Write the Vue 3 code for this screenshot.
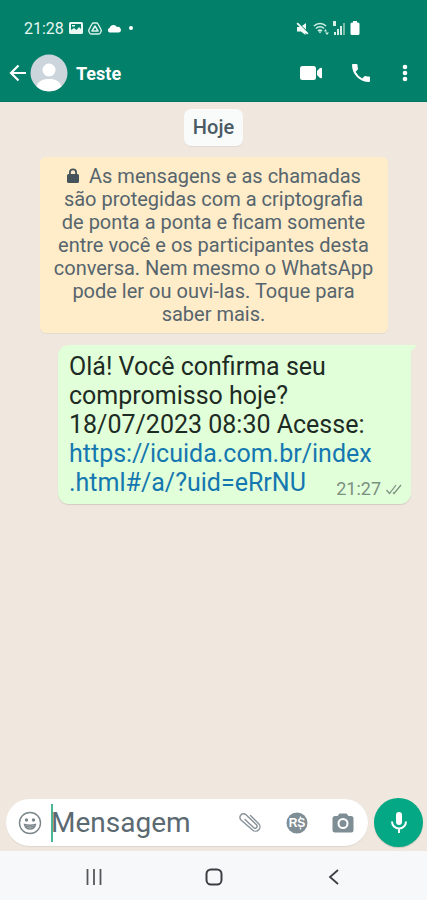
<script setup>
import { ref } from 'vue'

const draft = ref('')
const contact = 'Teste'
const link = ['https://icuida.com.br/index', '.html#/a/?uid=eRrNU']
</script>

<template>
  <div class="screen">
    <header class="top">
      <div class="status">
        <div class="status-left">
          <span class="clock">21:28</span>
          <svg width="14" height="12" viewBox="0 0 14 12" aria-hidden="true">
            <path fill="#e8f7f2" fill-rule="evenodd" d="M1.500 0h11A1.500 1.500 0 0 1 14 1.500v9a1.500 1.500 0 0 1-1.500 1.500h-11A1.500 1.500 0 0 1 0 10.500v-9A1.500 1.500 0 0 1 1.500 0zM2 2v6l3-2 2.500 2L10 5l2 2V2zM3 3h3v1.500H3z" />
          </svg>
          <svg width="14" height="13" viewBox="0 0 14 13" fill="none" stroke="#dcf2eb" stroke-linejoin="round" aria-hidden="true">
            <path stroke-width="1.400" d="M5.500 1h3q1 0 1.500 1l3 5.500q.5 1 0 2l-.7 1.500q-.5 1-1.500 1H3.200q-1 0-1.500-1L1 9.500q-.5-1 0-2L4 2q.5-1 1.500-1z" />
            <path stroke-width="1.500" d="M7 4 4 9h6z" />
          </svg>
          <svg width="14" height="9" viewBox="0 0 14 9" aria-hidden="true">
            <path fill="#fff" d="M2.500 8.500a2.300 2.300 0 0 1 0-4.400 4 4 0 0 1 7.400-1A2.800 2.800 0 0 1 12 8.500z" />
          </svg>
          <i class="dot"></i>
        </div>
        <div class="status-right">
          <svg width="13" height="13" viewBox="0 0 13 13" aria-hidden="true">
            <path fill="#f2fbf8" d="M1 5h3l5.500 5.500V13L5 9.500H1zM6 4l4-3v6.500zM.5 1.800 1.800.5l10.700 10.700-1.300 1.300z" />
          </svg>
          <svg width="16" height="13" viewBox="0 0 16 13" fill="none" stroke="#d5f0e7" stroke-width="1.600" aria-hidden="true">
            <path d="M1 4a8.500 8.500 0 0 1 12 0M3 6.500a5.500 5.500 0 0 1 8 0M5 9a3 3 0 0 1 4 0" />
            <path fill="#d5f0e7" stroke="none" d="M5.500 9.500h3L7 11.500zM11 9.500l1.500-2.500L14 9.500zM12 10.500h4l-2 2.500z" />
          </svg>
          <svg width="13" height="14" viewBox="0 0 13 14" aria-hidden="true">
            <path fill="#d5f0e7" d="M0 0h3v5H0zM1 11h2v3H1zM4 8h2v6H4zM7 5h2v9H7z" />
            <path fill="#78b9a8" d="M10 2h2v12h-2z" />
          </svg>
          <svg width="10" height="14" viewBox="0 0 10 14" aria-hidden="true">
            <path fill="#fff" d="M3 0h4v1.500h1A1.500 1.500 0 0 1 9.500 3v9.500A1.500 1.500 0 0 1 8 14H2A1.500 1.500 0 0 1 .5 12.500V3A1.500 1.500 0 0 1 2 1.500h1z" />
          </svg>
        </div>
      </div>

      <div class="bar">
        <button class="icon back" aria-label="Voltar">
          <svg width="18" height="18" viewBox="0 0 18 18" fill="none" stroke="#fff" stroke-width="2.200" aria-hidden="true">
            <path d="M17 9H2M9.500 1.500 2 9l7.500 7.500" />
          </svg>
        </button>
        <svg class="avatar" width="38" height="38" viewBox="0 0 38 38" aria-hidden="true">
          <circle cx="19" cy="19" r="18.500" fill="#cdd5dc" />
          <circle cx="19" cy="16" r="6.500" fill="#fff" />
          <path fill="#fff" d="M6.500 32.500C8 27.500 12 25 19 25s11 2.500 12.500 7.500A18.500 18.500 0 0 1 6.500 32.500z" />
        </svg>
        <h1>{{ contact }}</h1>
        <div class="actions">
          <button class="icon" aria-label="Chamada de vídeo">
            <svg width="24" height="16" viewBox="0 0 24 16" fill="#fff" aria-hidden="true">
              <rect x="1" y="1" width="16" height="14" rx="2.500" />
              <path d="M18 6l3-3q2-1 2 1v8q0 2-2 1l-3-3z" />
            </svg>
          </button>
          <button class="icon" aria-label="Chamada de voz">
            <svg width="24" height="24" viewBox="0 0 24 24" fill="#fff" aria-hidden="true">
              <path d="M6.620 10.790a15.150 15.150 0 0 0 6.590 6.590l2.200-2.200a1 1 0 0 1 1.020-.24 11.400 11.400 0 0 0 3.570.57 1 1 0 0 1 1 1V20a1 1 0 0 1-1 1A17 17 0 0 1 3 4a1 1 0 0 1 1-1h3.500a1 1 0 0 1 1 1c0 1.250.2 2.450.57 3.570a1 1 0 0 1-.25 1.020z" />
            </svg>
          </button>
          <button class="icon" aria-label="Mais opções">
            <svg width="12" height="18" viewBox="0 0 12 18" fill="#fff" aria-hidden="true">
              <circle cx="6" cy="3" r="2.300" /><circle cx="6" cy="9" r="2.300" /><circle cx="6" cy="15" r="2.300" />
            </svg>
          </button>
        </div>
      </div>
    </header>

    <main class="chat">
      <div class="day">Hoje</div>
      <p class="notice">
        <svg class="lock" width="14" height="16" viewBox="0 0 14 16" aria-hidden="true">
          <path fill="#44545a" fill-rule="evenodd" d="M3 6V4.500a4 4 0 0 1 8 0V6h.5A1.500 1.500 0 0 1 13 7.500v6a1.500 1.500 0 0 1-1.500 1.500h-9A1.500 1.500 0 0 1 1 13.500v-6A1.500 1.500 0 0 1 2.500 6zM4.800 6h4.400V4.500a2.200 2.200 0 0 0-4.400 0z" />
        </svg>
        As mensagens e as chamadas são protegidas com a criptografia de ponta a ponta e ficam somente entre você e os participantes desta conversa. Nem mesmo o WhatsApp pode ler ou ouvi-las. Toque para saber mais.
      </p>
      <article class="bubble">
        <svg class="tail" width="9" height="9" viewBox="0 0 9 9" aria-hidden="true">
          <path fill="#e1ffd9" d="M0 0h7q2 0 1 1.500L3 6v3H0z" />
        </svg>
        <p>Olá! Você confirma seu compromisso hoje? 18/07/2023 08:30 Acesse: <a href="#">{{ link[0] }}<wbr>{{ link[1] }}</a></p>
        <div class="meta">
          <time>21:27</time>
          <svg width="16" height="11" viewBox="0 0 16 11" fill="none" stroke="#7b8f81" stroke-width="1.200" aria-hidden="true">
            <path d="M.5 6l3 3.500L10 1M7 8.500l1 1L15 1" />
          </svg>
        </div>
      </article>
    </main>

    <form class="composer" @submit.prevent>
      <div class="field">
        <button type="button" class="icon" aria-label="Emoji">
          <svg width="24" height="24" viewBox="0 0 24 24" fill="none" stroke="#7c878c" stroke-width="1.400" aria-hidden="true">
            <circle cx="12" cy="12" r="10.500" />
            <circle cx="8.500" cy="9" r="1" fill="#7c878c" /><circle cx="15.500" cy="9" r="1" fill="#7c878c" />
            <path d="M6.500 13.500q5.500 1.500 11 0-1 4.500-5.500 4.500t-5.500-4.500z" />
            <path d="M8 15.500q4 1 8 0" />
          </svg>
        </button>
        <i class="caret"></i>
        <input v-model="draft" type="text" placeholder="Mensagem" aria-label="Mensagem" />
        <button type="button" class="icon" aria-label="Anexar">
          <svg width="24" height="22" viewBox="0 0 24 22" fill="none" stroke="#879197" stroke-width="1.400" stroke-linecap="round" aria-hidden="true">
            <path d="M12.500 3.500 20.500 11.500a4.200 4.200 0 0 1-6 6.500L3 8a3.600 3.600 0 0 1 5-5.200l10.500 10a2 2 0 0 1-3 2.700L7 7.500" />
          </svg>
        </button>
        <button type="button" class="icon" aria-label="Pagamento">
          <svg width="22" height="22" viewBox="0 0 22 22" aria-hidden="true">
            <circle cx="11" cy="11" r="10.500" fill="#7f8d95" />
            <text x="11" y="15" text-anchor="middle" class="coin">RS</text>
            <path d="M14.500 4.500v2M14.500 15.500v2" stroke="#fff" stroke-width="1.300" />
          </svg>
        </button>
        <button type="button" class="icon" aria-label="Câmera">
          <svg width="22" height="20" viewBox="0 0 22 20" aria-hidden="true">
            <path fill="#7f8d95" d="M7.500.5h7l2 2.500H19a2.500 2.500 0 0 1 2.500 2.500V17a2.500 2.500 0 0 1-2.500 2.500H3A2.500 2.500 0 0 1 .5 17V5.500A2.500 2.500 0 0 1 3 3h2.500z" />
            <circle cx="11" cy="10.500" r="4.500" fill="none" stroke="#fff" stroke-width="2" />
          </svg>
        </button>
      </div>
      <button type="button" class="mic" aria-label="Gravar áudio">
        <svg width="18" height="24" viewBox="0 0 18 24" aria-hidden="true">
          <rect x="6" y="1" width="6" height="13" rx="3" fill="#fff" />
          <path d="M2 10.500a7 7 0 0 0 14 0M9 17.500V22" fill="none" stroke="#fff" stroke-width="2" />
        </svg>
      </button>
    </form>

    <nav class="system">
      <button class="icon" aria-label="Recentes">
        <svg width="18" height="18" viewBox="0 0 18 18" stroke="#55585b" stroke-width="1.800" aria-hidden="true">
          <path d="M2.500 1v16M9 1v16M15.500 1v16" />
        </svg>
      </button>
      <button class="icon" aria-label="Início">
        <svg width="18" height="18" viewBox="0 0 18 18" fill="none" stroke="#3c3f42" stroke-width="2" aria-hidden="true">
          <rect x="1.500" y="1.500" width="15" height="15" rx="4.500" />
        </svg>
      </button>
      <button class="icon" aria-label="Voltar">
        <svg width="18" height="18" viewBox="0 0 18 18" fill="none" stroke="#3c3f42" stroke-width="1.800" aria-hidden="true">
          <path d="M13 2 5 9l8 7" />
        </svg>
      </button>
    </nav>
  </div>
</template>

<style>
body {
  background: #f0e8df;
}
</style>

<style scoped>
.screen {
  display: flex;
  flex-direction: column;
  min-height: 100vh;
  font-family: Roboto, "Liberation Sans", sans-serif;
  background: #f0e8df;
}
svg {
  display: block;
}
.icon {
  display: grid;
  place-items: center;
  padding: 0;
  border: 0;
  background: none;
}
.top {
  padding: 16px 0 3px;
  background: #028069;
  border-bottom: 1px solid #027460;
  color: #fff;
}
.status {
  display: flex;
  justify-content: space-between;
  height: 24px;
  margin-bottom: 8px;
  padding: 0 67px 0 24px;
}
.status-left,
.status-right {
  display: flex;
  align-items: center;
}
.status-left {
  gap: 5px;
}
.status-right {
  gap: 4px;
}
.clock {
  font-size: 16px;
  color: #e8f7f2;
}
.dot {
  width: 4px;
  height: 4px;
  margin-left: 3px;
  border-radius: 50%;
  background: #fff;
}
.bar {
  display: flex;
  align-items: center;
  height: 50px;
  padding: 0 16px 0 9px;
}
.avatar {
  margin: 0 8px 0 3px;
}
h1 {
  flex: 1;
  margin: 0;
  font-size: 18px;
  font-weight: 700;
}
.actions {
  display: flex;
  align-items: center;
  gap: 26px;
}
.chat {
  flex: 1;
  display: flex;
  flex-direction: column;
  align-items: center;
  padding: 7px 16px 16px;
}
.day {
  padding: 0 9px;
  border-radius: 7px;
  background: #f9fafa;
  box-shadow: 0 1px 1px rgba(0, 0, 0, 0.06);
  color: #4a5b65;
  font-size: 20px;
  font-weight: 500;
  line-height: 37px;
}
.notice {
  box-sizing: border-box;
  width: 348px;
  max-width: 100%;
  margin: 11px 0 0;
  padding: 8px 12px 7px;
  border-radius: 6px;
  background: #ffecc9;
  box-shadow: 0 1px 1px rgba(0, 0, 0, 0.06);
  color: #56656d;
  font-size: 20px;
  line-height: 23px;
  text-align: center;
}
.lock {
  display: inline-block;
  margin-right: 4px;
  vertical-align: -1px;
}
.bubble {
  position: relative;
  align-self: flex-end;
  box-sizing: border-box;
  width: 353px;
  max-width: 100%;
  margin-top: 12px;
  padding: 7px 11px;
  border-radius: 11px 0 11px 11px;
  background: #e1ffd9;
  box-shadow: 0 1px 1px rgba(0, 0, 0, 0.12);
  color: #1d2b24;
  font-size: 25px;
  line-height: 29px;
}
.bubble p {
  margin: 0;
}
.bubble a {
  color: #1577b0;
  text-decoration: none;
}
.tail {
  position: absolute;
  top: 0;
  right: -6px;
}
.meta {
  position: absolute;
  right: 9px;
  bottom: 5px;
  display: flex;
  align-items: center;
  gap: 5px;
  color: #7b8f81;
  font-size: 18px;
  line-height: 20px;
}
.composer {
  display: flex;
  align-items: center;
  gap: 6px;
  padding: 0 4px 4px 6px;
}
.field {
  flex: 1;
  display: flex;
  align-items: center;
  min-width: 0;
  height: 47px;
  padding: 0 14px 0 12px;
  gap: 24px;
  border-radius: 24px;
  background: #fff;
  box-shadow: 0 1px 1px rgba(0, 0, 0, 0.08);
}
.caret {
  width: 2px;
  height: 38px;
  margin: 0 -26px 0 -15px;
  background: #4bb596;
}
input {
  flex: 1;
  min-width: 0;
  padding: 0;
  border: 0;
  outline: 0;
  background: none;
  color: #1d2b24;
  font-family: inherit;
  font-size: 28px;
}
input::placeholder {
  color: #5b6971;
  opacity: 1;
}
.coin {
  fill: #fff;
  font-size: 12px;
  font-weight: 700;
}
.mic {
  flex: none;
  display: grid;
  place-items: center;
  width: 49px;
  height: 49px;
  padding: 0;
  border: 0;
  border-radius: 50%;
  background: #05a884;
  box-shadow: 0 1px 1px rgba(0, 0, 0, 0.15);
}
.system {
  display: flex;
  justify-content: space-between;
  align-items: center;
  height: 49px;
  padding: 2px 84px 0 85px;
  box-sizing: border-box;
  background: #f7f8fa;
}
</style>
